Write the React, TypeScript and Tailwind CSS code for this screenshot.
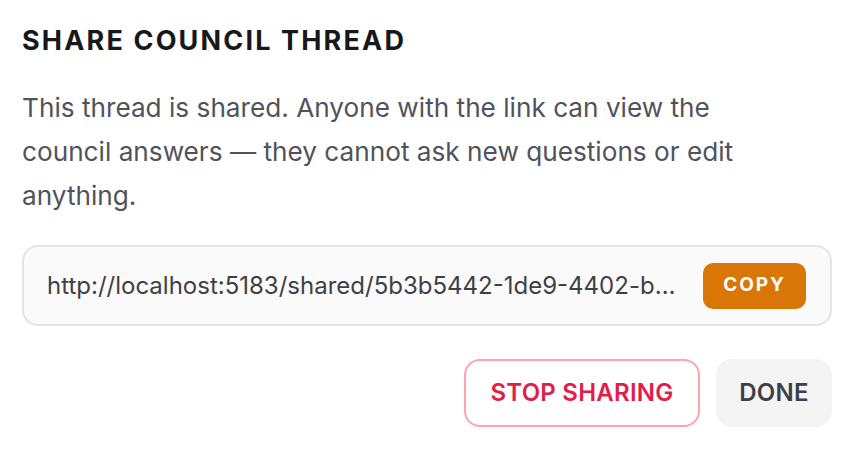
export default function App() {
  return (
    <div
      className="w-[864px] h-[454px] bg-white pl-[22px] pr-[32px] pt-[25px]"
      style={{ fontFamily: 'Inter, "Noto Sans", sans-serif' }}
    >
      <h2 className="text-[27px] leading-[32px] font-bold tracking-[0.08em] text-[#18181b]">
        SHARE COUNCIL THREAD
      </h2>
      <p className="mt-[29px] max-w-[760px] text-[26.2px] leading-[44px] text-[#52525b]">
        This thread is shared. Anyone with the link can view the council answers — they cannot ask new questions or edit anything.
      </p>
      <div className="mt-[27px] h-[81px] rounded-[16px] border-2 border-[#e4e4e7] bg-[#fafafa] flex items-center pl-[23px] pr-[24px] gap-[26px]">
        <div className="flex-1 min-w-0 truncate text-[24px] text-[#3f3f46]">
          http://localhost:5183/shared/5b3b5442-1de9-4402-b7a1-3c9e2f4d8a61
        </div>
        <button className="shrink-0 w-[103px] h-[46px] rounded-[10px] bg-[#d97706] text-white text-[19px] font-bold tracking-[0.1em]">
          COPY
        </button>
      </div>
      <div className="mt-[33px] flex justify-end gap-[16px]">
        <button className="w-[236px] h-[68px] rounded-[16px] border-2 border-[#fda4af] bg-white text-[#e11d48] text-[24px] font-semibold tracking-[0.01em]">
          STOP SHARING
        </button>
        <button className="w-[116px] h-[68px] rounded-[16px] bg-[#f4f4f5] text-[#3f3f46] text-[24px] font-semibold tracking-[0.01em]">
          DONE
        </button>
      </div>
    </div>
  );
}
